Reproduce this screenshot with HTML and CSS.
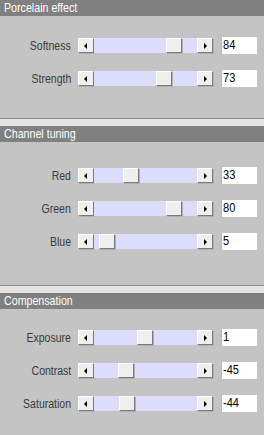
FILE: index.html
```html
<!DOCTYPE html>
<html>
<head>
<meta charset="utf-8">
<link rel="stylesheet" href="styles.css">
</head>
<body>
<div class="panel">
  <div class="section s1">
    <div class="header"><span class="htext">Porcelain effect</span></div>
    <div class="body">
      <div class="row"><span class="label"><span class="ltext">Softness</span></span><div class="slider"><span class="btn left"></span><div class="track"><span class="thumb" style="left:72px"></span></div><span class="btn right"></span></div><span class="value"><span class="vtext">84</span></span></div>
      <div class="row"><span class="label"><span class="ltext">Strength</span></span><div class="slider"><span class="btn left"></span><div class="track"><span class="thumb" style="left:62px"></span></div><span class="btn right"></span></div><span class="value"><span class="vtext">73</span></span></div>
    </div>
  </div>
  <div class="gap"></div>
  <div class="section s2">
    <div class="header"><span class="htext">Channel tuning</span></div>
    <div class="body">
      <div class="row"><span class="label"><span class="ltext">Red</span></span><div class="slider"><span class="btn left"></span><div class="track"><span class="thumb" style="left:29px"></span></div><span class="btn right"></span></div><span class="value"><span class="vtext">33</span></span></div>
      <div class="row"><span class="label"><span class="ltext">Green</span></span><div class="slider"><span class="btn left"></span><div class="track"><span class="thumb" style="left:72px"></span></div><span class="btn right"></span></div><span class="value"><span class="vtext">80</span></span></div>
      <div class="row"><span class="label"><span class="ltext">Blue</span></span><div class="slider"><span class="btn left"></span><div class="track"><span class="thumb" style="left:5px"></span></div><span class="btn right"></span></div><span class="value"><span class="vtext">5</span></span></div>
    </div>
  </div>
  <div class="gap"></div>
  <div class="section s3">
    <div class="header"><span class="htext">Compensation</span></div>
    <div class="body">
      <div class="row"><span class="label"><span class="ltext">Exposure</span></span><div class="slider"><span class="btn left"></span><div class="track"><span class="thumb" style="left:43px"></span></div><span class="btn right"></span></div><span class="value"><span class="vtext">1</span></span></div>
      <div class="row"><span class="label"><span class="ltext">Contrast</span></span><div class="slider"><span class="btn left"></span><div class="track"><span class="thumb" style="left:24px"></span></div><span class="btn right"></span></div><span class="value"><span class="vtext">-45</span></span></div>
      <div class="row"><span class="label"><span class="ltext">Saturation</span></span><div class="slider"><span class="btn left"></span><div class="track"><span class="thumb" style="left:25px"></span></div><span class="btn right"></span></div><span class="value"><span class="vtext">-44</span></span></div>
    </div>
  </div>
</div>
</body>
</html>
```
FILE: styles.css
```css
html, body {
  margin: 0;
  padding: 0;
  background: #c4c4c4;
}
.panel {
  width: 264px;
  height: 435px;
  overflow: hidden;
  font-family: "Liberation Sans", Arial, sans-serif;
  background: #c4c4c4;
}
.header {
  height: 16px;
  line-height: 16px;
  background: #808080;
  color: #ffffff;
  font-size: 13px;
  padding-left: 4px;
  white-space: nowrap;
}
.htext {
  display: inline-block;
  transform: scaleX(0.82);
  transform-origin: left center;
}
.body {
  display: flex;
  flex-direction: column;
  gap: 18px;
}
.s1 .body { padding: 22px 0 32px; border-bottom: 1px solid #8a8a8a; }
.s2 .body { padding: 26px 0 36px; border-bottom: 1px solid #8a8a8a; }
.s3 .body { padding: 21px 0 0; }
.gap {
  height: 7px;
  background: #e4e4e4;
}
.row {
  display: flex;
  align-items: center;
  height: 15px;
}
.label {
  width: 71px;
  text-align: right;
  margin-right: 7px;
  font-size: 12.5px;
  color: #3a3a3a;
  white-space: nowrap;
}
.ltext {
  display: inline-block;
  transform: scaleX(0.84);
  transform-origin: right center;
}
.slider {
  display: flex;
  width: 135px;
  height: 15px;
}
.btn, .thumb {
  box-sizing: border-box;
  width: 16px;
  height: 15px;
  background: #efefef;
  border-top: 1px solid #ffffff;
  border-left: 1px solid #ffffff;
  border-right: 1px solid #7a7a7a;
  border-bottom: 1px solid #7a7a7a;
  box-shadow: 1px 1px 0 #b0b0b0;
}
.btn {
  position: relative;
  flex: none;
}
.btn::after {
  content: "";
  position: absolute;
  top: 4px;
  width: 0;
  height: 0;
  border-top: 3px solid transparent;
  border-bottom: 3px solid transparent;
}
.btn.left::after {
  left: 5px;
  border-right: 3px solid #000;
}
.btn.right::after {
  left: 6px;
  border-left: 3px solid #000;
}
.track {
  position: relative;
  flex: 1;
  height: 15px;
  background: #dcdcfc;
}
.thumb {
  position: absolute;
  top: 0;
}
.value {
  box-sizing: border-box;
  margin-left: 8px;
  width: 36px;
  height: 17px;
  background: #ffffff;
  border-left: 1px solid #b8b8b8;
  font-size: 13px;
  line-height: 16px;
  padding-left: 1px;
  color: #000;
  white-space: nowrap;
}
.vtext {
  display: inline-block;
  transform: scaleX(0.85);
  transform-origin: left center;
}
```
